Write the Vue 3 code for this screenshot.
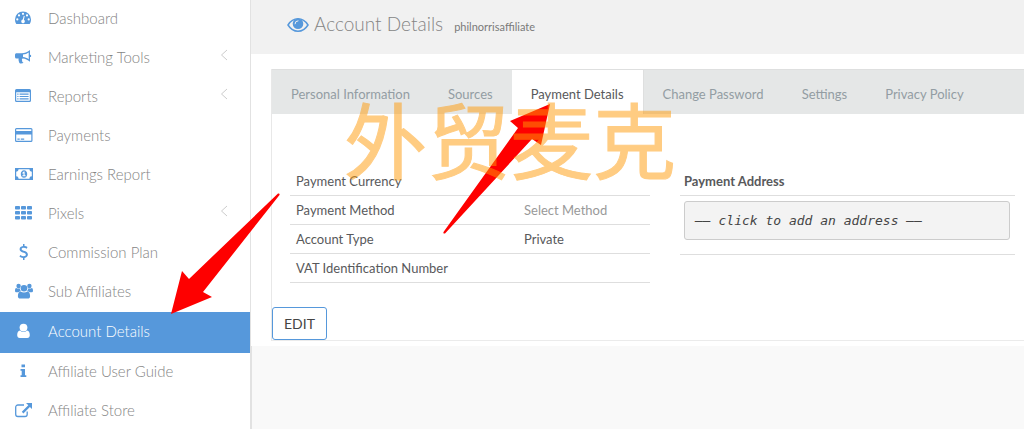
<script setup>
import { ref } from 'vue'

const items = [
  { icon: 'gauge', label: 'Dashboard' },
  { icon: 'horn', label: 'Marketing Tools', sub: true },
  { icon: 'list', label: 'Reports', sub: true },
  { icon: 'card', label: 'Payments' },
  { icon: 'money', label: 'Earnings Report' },
  { icon: 'grid', label: 'Pixels', sub: true },
  { icon: 'dollar', label: 'Commission Plan' },
  { icon: 'group', label: 'Sub Affiliates' },
  { icon: 'user', label: 'Account Details' },
  { icon: 'info', label: 'Affiliate User Guide' },
  { icon: 'external', label: 'Affiliate Store' }
]
const tabs = ['Personal Information', 'Sources', 'Payment Details', 'Change Password', 'Settings', 'Privacy Policy']
const activeTab = ref('Payment Details')
const rows = [
  { label: 'Payment Currency', value: '' },
  { label: 'Payment Method', value: 'Select Method', muted: true },
  { label: 'Account Type', value: 'Private' },
  { label: 'VAT Identification Number', value: '' }
]
</script>

<template>
  <div class="page">
    <nav class="sidebar">
      <a v-for="item in items" :key="item.label" href="#" class="item" :class="{ active: item.label === 'Account Details' }">
        <svg class="icon" viewBox="0 0 18 16" fill="currentColor" aria-hidden="true">
          <template v-if="item.icon === 'gauge'">
            <path fill-rule="evenodd" d="M8 1.500a8 8 0 0 0-8 8c0 1.800.5 3.300 1.300 4.500h13.400c.8-1.200 1.300-2.700 1.300-4.500a8 8 0 0 0-8-8zM8 2.700a1.100 1.100 0 1 1 0 2.200 1.100 1.100 0 0 1 0-2.200zM4 4.300a1.100 1.100 0 1 1 0 2.200 1.100 1.100 0 0 1 0-2.200zM12 4.300a1.100 1.100 0 1 1 0 2.200 1.100 1.100 0 0 1 0-2.200zM2.300 8.300a1.100 1.100 0 1 1 0 2.200 1.100 1.100 0 0 1 0-2.200zM13.700 8.300a1.100 1.100 0 1 1 0 2.200 1.100 1.100 0 0 1 0-2.200zM8.800 5.800l.9.2-.8 3.800a1.800 1.800 0 1 1-1.100-.2z" />
          </template>
          <template v-else-if="item.icon === 'horn'">
            <path fill-rule="evenodd" d="M15 1v4.700a1.200 1.200 0 0 1 0 2.400v4.700c-2.400-2-4.800-3.100-7.200-3.300-.9.300-1.200 1.200-.6 1.900-.5.800.2 1.400 1.200 2.200-.6 1.100-2.900 1.200-4 .3-.6-2-1.200-3.200-.7-4.500H1.500A1.500 1.500 0 0 1 0 7.900V5.800c0-.8.700-1.500 1.500-1.500h5.200C9.500 4.300 12.300 3.200 15 1zM13.700 3.500C11.900 4.700 10.100 5.400 8 5.600v2.500c2.100.2 3.900.9 5.700 2.200z" />
          </template>
          <template v-else-if="item.icon === 'list'">
            <path fill-rule="evenodd" d="M1.500 1h13A1.500 1.500 0 0 1 16 2.500v10a1.500 1.500 0 0 1-1.500 1.500h-13A1.500 1.500 0 0 1 0 12.500v-10A1.500 1.500 0 0 1 1.500 1zM1.200 4.200v8c0 .4.200.6.600.6h12.400c.4 0 .6-.2.600-.6v-8z" />
            <path d="M2.300 5.500h1.200v1.200H2.300zM4.600 5.500h9v1.200h-9zM2.300 7.900h1.200v1.200H2.300zM4.600 7.900h9v1.200h-9zM2.300 10.300h1.200v1.200H2.300zM4.600 10.300h9v1.200h-9z" />
          </template>
          <template v-else-if="item.icon === 'card'">
            <path fill-rule="evenodd" d="M1.500 1h14.500a1.500 1.500 0 0 1 1.500 1.500v11a1.500 1.500 0 0 1-1.500 1.500H1.500A1.500 1.500 0 0 1 0 13.500v-11A1.500 1.500 0 0 1 1.500 1zM1.200 2.500v1.600h15.100V2.500c0-.2-.1-.3-.3-.3H1.500c-.2 0-.3.100-.3.300zM1.200 7.500v6c0 .2.100.3.300.3H16c.2 0 .3-.1.300-.3v-6z" />
            <path d="M2.400 11.500h2.300v1.200H2.400zM5.800 11.500h3.400v1.200H5.800z" />
          </template>
          <template v-else-if="item.icon === 'money'">
            <path fill-rule="evenodd" d="M0 2h18v12H0zM3.600 3.300a2.400 2.400 0 0 1-2.400 2.400v4.600a2.400 2.400 0 0 1 2.400 2.400h10.800a2.400 2.400 0 0 1 2.400-2.400V5.700a2.400 2.400 0 0 1-2.400-2.400z" />
            <path fill-rule="evenodd" d="M9 4.200c2 0 3.200 1.800 3.200 3.800S11 11.800 9 11.800 5.800 10 5.800 8 7 4.200 9 4.200zM8.700 5.600L7.200 6.900l.7.800.6-.5v2.100H7.400v1h3.200v-1h-1V5.600z" />
          </template>
          <template v-else-if="item.icon === 'grid'">
            <g v-for="r in 3" :key="r">
              <rect v-for="c in 3" :key="c" :x="(c - 1) * 6" :y="1 + (r - 1) * 5" width="5" height="3.600" rx=".8" />
            </g>
          </template>
          <template v-else-if="item.icon === 'dollar'">
            <path d="M8 0h1.500v2c1.200.1 2.200.5 3 1.100l-.8 1.600c-1-.6-1.900-1-3-1-1.300 0-2.100.6-2.100 1.400 0 2.300 6.300 1.500 6.300 5.400 0 1.900-1.300 3.200-3.400 3.500v2H8v-2c-1.500-.2-2.700-.7-3.600-1.500l1-1.600c1 .8 2.100 1.300 3.300 1.300 1.400 0 2.200-.6 2.200-1.600 0-2.500-6.300-1.600-6.300-5.400C4.600 3.500 5.900 2.300 8 2z" />
          </template>
          <template v-else-if="item.icon === 'group'">
            <circle cx="3.600" cy="3" r="2.200" />
            <circle cx="14.400" cy="3" r="2.200" />
            <circle cx="9" cy="5.300" r="3.300" />
            <path d="M1.200 5c1 .7 2.400.8 3.500.3.100 1.200.5 2 1.300 2.800-1.100.1-1.900.5-2.600 1.200H1.700C.6 9.300 0 8.700 0 7.700 0 6.600.3 5.100 1.200 5zM16.800 5c-1 .7-2.400.8-3.500.3-.1 1.200-.5 2-1.300 2.800 1.100.1 1.900.5 2.600 1.200h1.700c1.100 0 1.700-.6 1.700-1.600 0-1.100-.3-2.600-1.200-2.700zM5.600 8.400c2 1.500 4.800 1.500 6.800 0 2 .2 2.700 2.500 2.700 4.800 0 1.400-.9 2.300-2.400 2.300H5.300c-1.500 0-2.400-.9-2.400-2.300 0-2.300.7-4.600 2.700-4.800z" />
          </template>
          <template v-else-if="item.icon === 'user'">
            <path d="M5 7.500c2.200 2 4.800 2 7 0 2 .3 2.800 2.400 2.800 4.800 0 1.600-1 2.700-2.500 2.700H4.700c-1.500 0-2.500-1.100-2.500-2.700 0-2.400.8-4.500 2.800-4.800z" />
            <circle cx="8.500" cy="4.600" r="3.900" />
          </template>
          <template v-else-if="item.icon === 'info'">
            <path d="M6.500 1.500h3.500v2.800H6.500zM5.500 6H10v6.200h1.300V14H5.500v-1.800h1.200V7.800H5.500z" />
          </template>
          <template v-else>
            <path d="M9 3H2.900A2.200 2.200 0 0 0 .7 5.200v7.100a2.200 2.200 0 0 0 2.200 2.200H10a2.200 2.200 0 0 0 2.200-2.200V9.500" fill="none" stroke="currentColor" stroke-width="1.300" />
            <path d="M11 1h6v6l-2.100-2.100-6.500 6.500-1.600-1.600 6.500-6.500z" />
          </template>
        </svg>
        <span class="label">{{ item.label }}</span>
        <svg v-if="item.sub" class="chevron" viewBox="0 0 8 12" aria-hidden="true">
          <path d="M7 1L1.500 6 7 11" fill="none" stroke="currentColor" />
        </svg>
      </a>
    </nav>

    <main class="main">
      <header class="header">
        <svg class="eye" viewBox="0 0 22 18" aria-hidden="true">
          <path d="M1 9C3.500 5 7 2.800 11 2.800S18.500 5 21 9c-2.500 4-6 6.200-10 6.200S3.500 13 1 9z" fill="none" stroke="currentColor" stroke-width="1.500" />
          <circle cx="11" cy="7.800" r="5.300" fill="currentColor" />
          <path d="M8 7.800a3 3 0 0 1 3-3" fill="none" stroke="#f1f1f1" stroke-width="1" stroke-linecap="round" />
        </svg>
        <h1>Account Details</h1>
        <small>philnorrisaffiliate</small>
      </header>

      <div class="content">
        <section class="panel">
          <div class="tabs" role="tablist">
            <button v-for="tab in tabs" :key="tab" type="button" role="tab" :aria-selected="tab === activeTab" :class="{ active: tab === activeTab }" @click="activeTab = tab">{{ tab }}</button>
          </div>
          <div class="body">
            <table class="details">
              <tbody>
                <tr v-for="row in rows" :key="row.label">
                  <th scope="row">{{ row.label }}</th>
                  <td :class="{ muted: row.muted }">{{ row.value }}</td>
                </tr>
              </tbody>
            </table>
            <div class="address">
              <h2>Payment Address</h2>
              <div class="address-cell">
                <button type="button">–– click to add an address ––</button>
              </div>
            </div>
          </div>
          <button type="button" class="edit">EDIT</button>
        </section>
      </div>
    </main>

    <svg class="arrows" width="1024" height="429" viewBox="0 0 1024 429" fill="#fe0000" aria-hidden="true">
      <path d="M171 314L182 271l7 8 89-85.500q2-.5 1.500 1.500L203 292l9 5z" />
      <path d="M550 104L510 121l8 7-74.500 104q-.5 2 1.500 1.500L532 139l9 6z" />
    </svg>
    <div class="watermark">外贸麦克</div>
  </div>
</template>

<style>
body {
  margin: 0;
  background: #f9f9f9;
}
</style>

<style scoped>
.page {
  position: relative;
  display: flex;
  height: 100vh;
  overflow: hidden;
  font-family: Lato, "Liberation Sans", sans-serif;
  font-size: 13px;
  color: #58595b;
}
.sidebar {
  flex: 0 0 252px;
  box-sizing: border-box;
  margin-right: -1px;
  border-right: 2px solid #e2e2e2;
  background: #fff;
}
.item {
  display: flex;
  align-items: center;
  box-sizing: border-box;
  height: 39px;
  padding: 0 22px 3px 15px;
  color: #858585;
  font-size: 15px;
  font-weight: 300;
  text-decoration: none;
}
.item.active {
  height: 41px;
  background: #5698db;
  color: #fff;
}
.icon {
  width: 18px;
  height: 16px;
  margin-right: 15px;
  color: #5698db;
}
.active .icon {
  color: #fff;
}
.label {
  flex: 1;
}
.chevron {
  width: 8px;
  height: 12px;
  margin-bottom: 4px;
  color: #ccc;
}
.main {
  flex: 1;
  min-width: 0;
}
.header {
  display: flex;
  align-items: baseline;
  height: 54px;
  padding-left: 36px;
  background: #f1f1f1;
  line-height: 48px;
}
.eye {
  align-self: center;
  width: 22px;
  height: 18px;
  margin: 0 5px 4px 0;
  color: #5698db;
}
h1 {
  margin: 0 11px 0 0;
  color: #858585;
  font-size: 19px;
  font-weight: 300;
}
small {
  font-size: 11px;
  color: #7a7a7a;
}
.content {
  padding: 15px 0 5px 20px;
  background: #fff;
}
.panel {
  border-left: 1px solid #e8e8e8;
  border-bottom: 1px solid #ebebeb;
}
.tabs {
  display: flex;
  height: 45px;
  background: #e5e7e7;
  border-top: 1px solid #dedfdf;
  box-sizing: border-box;
}
.tabs button {
  padding: 3px 19px 0;
  border: 0;
  background: none;
  color: #939da3;
  font: inherit;
}
.tabs button.active {
  border-right: 1px solid #dedfdf;
  background: #fff;
  color: #58595b;
}
.body {
  display: flex;
  align-items: flex-start;
  gap: 30px;
  padding: 53px 9px 0 18px;
}
.details {
  flex: 360 1 0;
  border-collapse: separate;
  border-spacing: 0;
  table-layout: fixed;
}
.details th,
.details td {
  box-sizing: border-box;
  height: 29px;
  padding: 0 6px;
  border-bottom: 1px solid #dedede;
  text-align: left;
  font-weight: 400;
}
.details th {
  width: 228px;
}
.details .muted {
  color: #999;
}
.address {
  flex: 335 1 0;
}
h2 {
  box-sizing: border-box;
  height: 29px;
  margin: 0;
  padding-left: 4px;
  border-bottom: 1px solid #dedede;
  font-size: 13px;
  line-height: 29px;
}
.address-cell {
  padding: 5px 5px 14px 4px;
  border-bottom: 1px solid #dedede;
}
.address button {
  width: 100%;
  height: 39px;
  padding: 0 10px;
  border: 1px solid #ccc;
  border-radius: 3px;
  background: #f3f3f3;
  color: #444;
  font: italic 13px "DejaVu Sans Mono", monospace;
  text-align: left;
}
.edit {
  display: block;
  width: 55px;
  height: 33px;
  margin-top: 24px;
  padding: 0;
  border: 1px solid #5698db;
  border-radius: 3px;
  background: #fff;
  color: #444;
  font: 14px Lato, sans-serif;
}
.arrows {
  position: absolute;
  top: 0;
  left: 0;
  pointer-events: none;
}
.watermark {
  position: absolute;
  top: 77px;
  left: 344px;
  color: #ff9a08;
  opacity: 0.5;
  font: 83px/120px "Noto Sans CJK SC", sans-serif;
  -webkit-text-stroke: 1px #ff9a08;
  white-space: nowrap;
  pointer-events: none;
}
</style>
